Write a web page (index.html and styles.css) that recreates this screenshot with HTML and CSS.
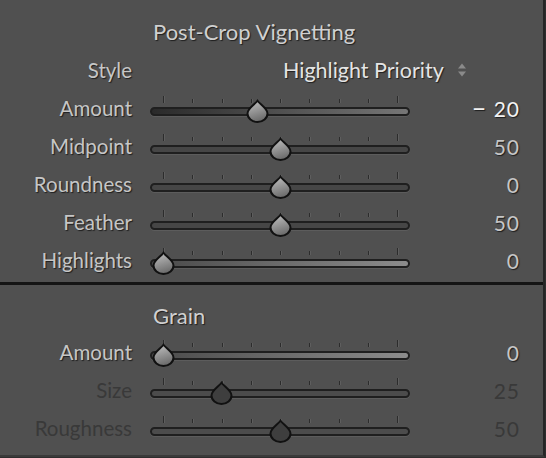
FILE: index.html
```html
<!DOCTYPE html>
<html lang="en">
<head>
  <meta charset="UTF-8" />
  <title>Effects</title>
  <link rel="stylesheet" href="styles.css">
</head>
<body>
  <svg class="defs" width="0" height="0">
    <defs>
      <linearGradient id="knob" x1="0" y1="0" x2="0.3" y2="1">
        <stop offset="0" stop-color="#c4c4c4" />
        <stop offset="1" stop-color="#6e6e6e" />
      </linearGradient>
      <path id="drop" d="M11.5 1.8 C13.8 5.2 21.5 9.5 21.5 14.5 A10 8.5 0 0 1 1.5 14.5 C1.5 9.5 9.2 5.2 11.5 1.8 Z" />
    </defs>
  </svg>

  <div class="panel">
    <section class="group">
      <h3 class="title">Post-Crop Vignetting</h3>
      <div class="row">
        <span class="label">Style</span>
        <span class="select">Highlight Priority
          <svg class="updown" width="10" height="16" viewBox="0 0 10 16"><path d="M5 1.5 L9 6.5 H1 Z M5 14.5 L9 9.5 H1 Z" fill="#8a8a8a"/></svg>
        </span>
      </div>
      <div class="row">
        <span class="label">Amount</span>
        <div class="slider tone">
          <div class="ticks"><i class="big"></i><i></i><i></i><i></i><i></i><i></i><i></i><i></i><i class="big"></i></div>
          <div class="track"></div>
          <svg class="thumb" style="left: 107px" width="23" height="24" viewBox="0 0 23 24"><use href="#drop" /></svg>
        </div>
        <span class="value active"><span class="sign">&ndash;</span>20</span>
      </div>
      <div class="row">
        <span class="label">Midpoint</span>
        <div class="slider">
          <div class="ticks"><i class="big"></i><i></i><i></i><i></i><i></i><i></i><i></i><i></i><i class="big"></i></div>
          <div class="track"></div>
          <svg class="thumb" style="left: 130px" width="23" height="24" viewBox="0 0 23 24"><use href="#drop" /></svg>
        </div>
        <span class="value">50</span>
      </div>
      <div class="row">
        <span class="label">Roundness</span>
        <div class="slider">
          <div class="ticks"><i class="big"></i><i></i><i></i><i></i><i></i><i></i><i></i><i></i><i class="big"></i></div>
          <div class="track"></div>
          <svg class="thumb" style="left: 130px" width="23" height="24" viewBox="0 0 23 24"><use href="#drop" /></svg>
        </div>
        <span class="value">0</span>
      </div>
      <div class="row">
        <span class="label">Feather</span>
        <div class="slider">
          <div class="ticks"><i class="big"></i><i></i><i></i><i></i><i></i><i></i><i></i><i></i><i class="big"></i></div>
          <div class="track"></div>
          <svg class="thumb" style="left: 130px" width="23" height="24" viewBox="0 0 23 24"><use href="#drop" /></svg>
        </div>
        <span class="value">50</span>
      </div>
      <div class="row">
        <span class="label">Highlights</span>
        <div class="slider light">
          <div class="ticks"><i class="big"></i><i></i><i></i><i></i><i></i><i></i><i></i><i></i><i class="big"></i></div>
          <div class="track"></div>
          <svg class="thumb" style="left: 13px" width="23" height="24" viewBox="0 0 23 24"><use href="#drop" /></svg>
        </div>
        <span class="value">0</span>
      </div>
    </section>

    <section class="group grain">
      <h3 class="title">Grain</h3>
      <div class="row">
        <span class="label">Amount</span>
        <div class="slider light">
          <div class="ticks"><i class="big"></i><i></i><i></i><i></i><i></i><i></i><i></i><i></i><i class="big"></i></div>
          <div class="track"></div>
          <svg class="thumb" style="left: 13px" width="23" height="24" viewBox="0 0 23 24"><use href="#drop" /></svg>
        </div>
        <span class="value">0</span>
      </div>
      <div class="row off">
        <span class="label">Size</span>
        <div class="slider">
          <div class="ticks"><i class="big"></i><i></i><i></i><i></i><i></i><i></i><i></i><i></i><i class="big"></i></div>
          <div class="track"></div>
          <svg class="thumb" style="left: 71px" width="23" height="24" viewBox="0 0 23 24"><use href="#drop" /></svg>
        </div>
        <span class="value">25</span>
      </div>
      <div class="row off">
        <span class="label">Roughness</span>
        <div class="slider">
          <div class="ticks"><i class="big"></i><i></i><i></i><i></i><i></i><i></i><i></i><i></i><i class="big"></i></div>
          <div class="track"></div>
          <svg class="thumb" style="left: 130px" width="23" height="24" viewBox="0 0 23 24"><use href="#drop" /></svg>
        </div>
        <span class="value">50</span>
      </div>
    </section>
  </div>
</body>
</html>
```

FILE: styles.css
```css
body {
  margin: 0;
  background: #2e2e2e;
  font-family: Lato, "Open Sans", sans-serif;
}
.defs {
  position: absolute;
}
.panel {
  width: 543px;
  height: 455px;
  background: #505050;
  border-right: 2px solid #262626;
  border-bottom: 2px solid #3a3a3a;
  overflow: hidden;
}
.group {
  padding: 18px 0 3px;
}
.group.grain {
  border-top: 3px solid #141414;
  padding-top: 17px;
}
.title {
  margin: 0 0 5px 153px;
  font-size: 22px;
  font-weight: normal;
  line-height: 28px;
  color: #d0d0d0;
  text-shadow: 1px 1px 1px #1e1e1e;
}
.grain .title {
  margin-bottom: 3px;
}
.row {
  display: grid;
  grid-template-columns: 132px 260px 92px;
  column-gap: 18px;
  align-items: center;
  height: 38px;
  font-size: 20.5px;
  color: #c6c6c6;
  text-shadow: 1px 1px 1px #1e1e1e;
}
.label {
  text-align: right;
}
.select {
  grid-column: 2 / 4;
  padding-left: 133px;
  font-size: 21.5px;
  color: #e4e4e4;
  display: flex;
  align-items: center;
}
.value {
  text-align: right;
  font-size: 21px;
  letter-spacing: 1px;
}
.value.active {
  color: #f2f2f2;
}
.sign {
  font-size: 26px;
  line-height: 0;
  margin-right: 6px;
}
.slider {
  position: relative;
  height: 24px;
}
.ticks {
  display: flex;
  justify-content: space-between;
  padding: 0 12px 0 13px;
  height: 7px;
  align-items: flex-end;
}
.ticks i {
  width: 1px;
  height: 4px;
  background: #2c2c2c;
  box-shadow: 1px 0 0 #5e5e5e;
}
.ticks i.big {
  height: 7px;
}
.track {
  margin-top: 4px;
  height: 5px;
  border: 2px solid #1f1f1f;
  border-radius: 5px;
  background: #464646;
  box-shadow: 0 1px 0 #5c5c5c;
}
.tone .track {
  background: linear-gradient(to right, #2a2a2a, #767676);
}
.light .track {
  background: linear-gradient(to right, #4a4a4a, #8c8c8c);
}
.thumb {
  position: absolute;
  top: 3px;
  margin-left: -11.5px;
  fill: url(#knob);
  stroke: #111;
  stroke-width: 2;
}
.row.off .label,
.row.off .value {
  color: #393939;
  text-shadow: none;
}
.off .thumb {
  fill: #3e3e3e;
}
.off .track {
  background: #4c4c4c;
}
.updown {
  margin-left: 13px;
}
```
